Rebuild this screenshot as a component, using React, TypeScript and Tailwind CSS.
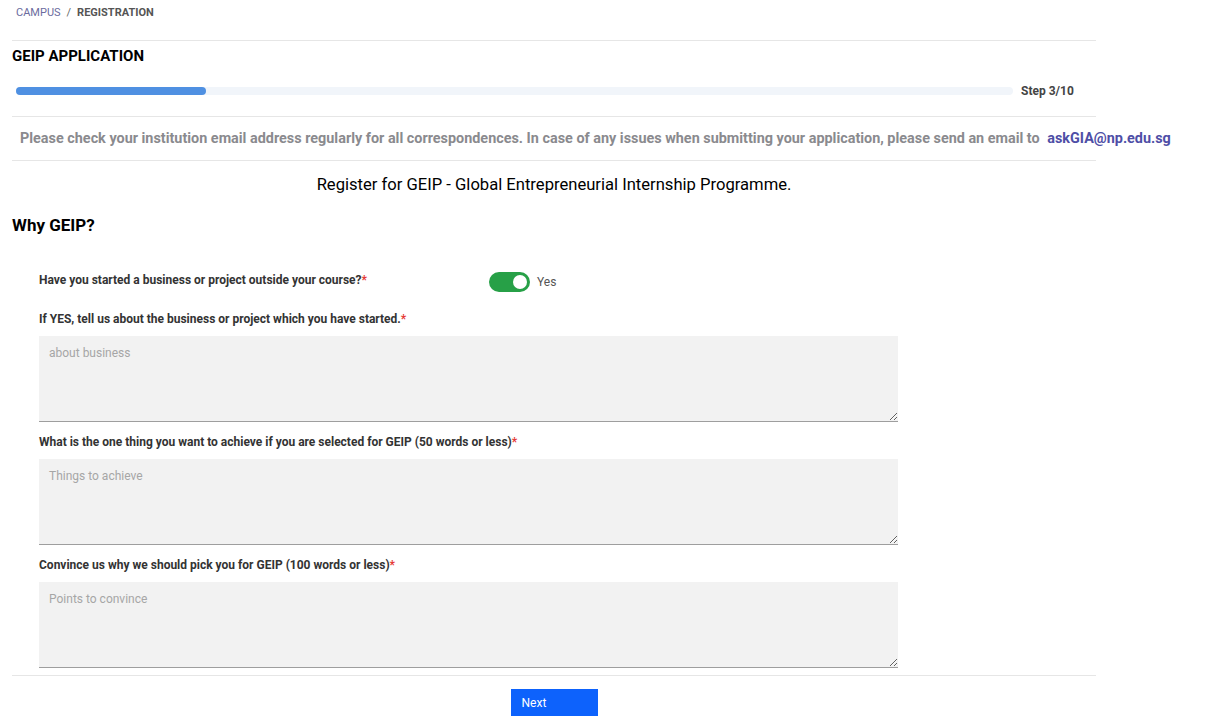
import React, { useState } from "react";

const Field = ({ label, placeholder }: { label: string; placeholder: string }) => (
  <div>
    <label className="block text-[12px] font-bold text-[#333] mb-[9px] leading-[16px]">
      {label}
      <span className="text-[#e53935]">*</span>
    </label>
    <textarea
      placeholder={placeholder}
      className="block w-full h-[86px] bg-[#f2f2f2] border-b border-[#9e9e9e] px-[10px] py-[8px] text-[12px] text-[#333] placeholder:text-[#a6a6a6] outline-none"
    />
  </div>
);

const App: React.FC = () => {
  const [started, setStarted] = useState(true);

  return (
    <div className="min-h-screen bg-white font-['Roboto',sans-serif] text-black">
      <div className="w-[1084px] ml-[12px]">
        {/* Breadcrumb */}
        <div className="flex items-start gap-[6px] pl-[4px] pt-[6px] h-[40px] text-[11px] leading-[14px]">
          <span className="text-[#6b6b9e]">CAMPUS</span>
          <span className="text-[#666]">/</span>
          <span className="text-[#555] font-bold">REGISTRATION</span>
        </div>
        <div className="border-t border-[#e6e6e6]" />

        {/* Title + progress */}
        <h1 className="text-[15px] font-bold leading-[18px] mt-[6px]">GEIP APPLICATION</h1>
        <div className="flex items-center mt-[20px] pl-[4px] h-[12px]">
          <div className="w-[997px] h-[8px] rounded-full bg-[#f1f5fa]">
            <div className="w-[190px] h-[8px] rounded-full bg-[#4f90e2]" />
          </div>
          <span className="ml-[8px] text-[12px] font-bold text-[#444]">Step 3/10</span>
        </div>
        <div className="border-t border-[#e6e6e6] mt-[19px]" />

        {/* Note */}
        <p className="pl-[8px] py-[12px] text-[14.4px] font-bold text-[#8a8a8e] whitespace-nowrap leading-[19px]">
          Please check your institution email address regularly for all correspondences. In case of any issues when submitting your application, please send an email to{" "}
          <a href="#" className="ml-[4px] text-[#4e4ea6]">askGIA@np.edu.sg</a>
        </p>
        <div className="border-t border-[#e6e6e6]" />

        <p className="text-center text-[16.6px] leading-[20px] mt-[14px]">
          Register for GEIP - Global Entrepreneurial Internship Programme.
        </p>

        <h2 className="text-[17px] font-bold leading-[20px] mt-[20px]">Why GEIP?</h2>

        {/* Form */}
        <div className="w-[859px] ml-[27px] mt-[34px] flex flex-col gap-[12px]">
          <div className="flex items-center h-[21px] mb-[9px]">
            <span className="w-[450px] text-[12px] font-bold text-[#333]">
              Have you started a business or project outside your course?
              <span className="text-[#e53935]">*</span>
            </span>
            <button
              type="button"
              onClick={() => setStarted(!started)}
              className={`relative w-[41px] h-[20px] rounded-full mt-[4px] ${started ? "bg-[#27a047]" : "bg-[#ccc]"}`}
            >
              <span
                className={`absolute top-[3px] w-[14px] h-[14px] rounded-full bg-white ${started ? "left-[24px]" : "left-[3px]"}`}
              />
            </button>
            <span className="ml-[7px] mt-[4px] text-[12px] text-[#555]">Yes</span>
          </div>

          <Field label="If YES, tell us about the business or project which you have started." placeholder="about business" />
          <Field label="What is the one thing you want to achieve if you are selected for GEIP (50 words or less)" placeholder="Things to achieve" />
          <Field label="Convince us why we should pick you for GEIP (100 words or less)" placeholder="Points to convince" />
        </div>

        <div className="border-t border-[#e6e6e6] mt-[7px]" />
        <div className="flex justify-center mt-[13px]">
          <button
            type="button"
            className="w-[87px] h-[27px] bg-[#0d62fc] text-white text-[12px] text-left pl-[11px]"
          >
            Next
          </button>
        </div>
      </div>
    </div>
  );
};

export default App;
